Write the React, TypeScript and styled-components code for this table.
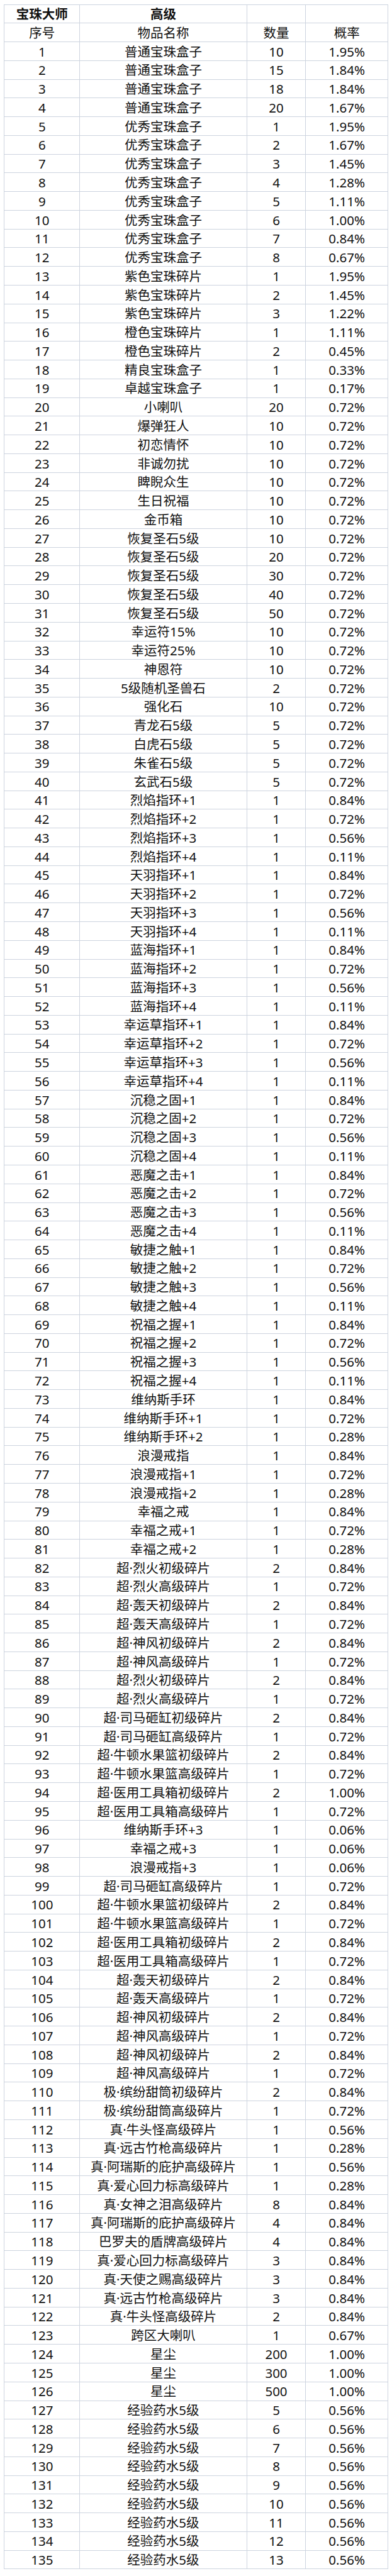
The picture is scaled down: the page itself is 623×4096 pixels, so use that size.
import React from "react";
import styled, { createGlobalStyle } from "styled-components";

type Row = [string, string, string];

const ringRates = ["0.84%", "0.72%", "0.56%", "0.11%"];
const rings = (name: string): Row[] =>
  ringRates.map((rate, i) => [`${name}+${i + 1}`, "1", rate]);

const rows: Row[] = [
  ["普通宝珠盒子", "10", "1.95%"],
  ["普通宝珠盒子", "15", "1.84%"],
  ["普通宝珠盒子", "18", "1.84%"],
  ["普通宝珠盒子", "20", "1.67%"],
  ["优秀宝珠盒子", "1", "1.95%"],
  ["优秀宝珠盒子", "2", "1.67%"],
  ["优秀宝珠盒子", "3", "1.45%"],
  ["优秀宝珠盒子", "4", "1.28%"],
  ["优秀宝珠盒子", "5", "1.11%"],
  ["优秀宝珠盒子", "6", "1.00%"],
  ["优秀宝珠盒子", "7", "0.84%"],
  ["优秀宝珠盒子", "8", "0.67%"],
  ["紫色宝珠碎片", "1", "1.95%"],
  ["紫色宝珠碎片", "2", "1.45%"],
  ["紫色宝珠碎片", "3", "1.22%"],
  ["橙色宝珠碎片", "1", "1.11%"],
  ["橙色宝珠碎片", "2", "0.45%"],
  ["精良宝珠盒子", "1", "0.33%"],
  ["卓越宝珠盒子", "1", "0.17%"],
  ["小喇叭", "20", "0.72%"],
  ["爆弹狂人", "10", "0.72%"],
  ["初恋情怀", "10", "0.72%"],
  ["非诚勿扰", "10", "0.72%"],
  ["睥睨众生", "10", "0.72%"],
  ["生日祝福", "10", "0.72%"],
  ["金币箱", "10", "0.72%"],
  ["恢复圣石5级", "10", "0.72%"],
  ["恢复圣石5级", "20", "0.72%"],
  ["恢复圣石5级", "30", "0.72%"],
  ["恢复圣石5级", "40", "0.72%"],
  ["恢复圣石5级", "50", "0.72%"],
  ["幸运符15%", "10", "0.72%"],
  ["幸运符25%", "10", "0.72%"],
  ["神恩符", "10", "0.72%"],
  ["5级随机圣兽石", "2", "0.72%"],
  ["强化石", "10", "0.72%"],
  ["青龙石5级", "5", "0.72%"],
  ["白虎石5级", "5", "0.72%"],
  ["朱雀石5级", "5", "0.72%"],
  ["玄武石5级", "5", "0.72%"],
  ...rings("烈焰指环"),
  ...rings("天羽指环"),
  ...rings("蓝海指环"),
  ...rings("幸运草指环"),
  ...rings("沉稳之固"),
  ...rings("恶魔之击"),
  ...rings("敏捷之触"),
  ...rings("祝福之握"),
  ["维纳斯手环", "1", "0.84%"],
  ["维纳斯手环+1", "1", "0.72%"],
  ["维纳斯手环+2", "1", "0.28%"],
  ["浪漫戒指", "1", "0.84%"],
  ["浪漫戒指+1", "1", "0.72%"],
  ["浪漫戒指+2", "1", "0.28%"],
  ["幸福之戒", "1", "0.84%"],
  ["幸福之戒+1", "1", "0.72%"],
  ["幸福之戒+2", "1", "0.28%"],
  ["超·烈火初级碎片", "2", "0.84%"],
  ["超·烈火高级碎片", "1", "0.72%"],
  ["超·轰天初级碎片", "2", "0.84%"],
  ["超·轰天高级碎片", "1", "0.72%"],
  ["超·神风初级碎片", "2", "0.84%"],
  ["超·神风高级碎片", "1", "0.72%"],
  ["超·烈火初级碎片", "2", "0.84%"],
  ["超·烈火高级碎片", "1", "0.72%"],
  ["超·司马砸缸初级碎片", "2", "0.84%"],
  ["超·司马砸缸高级碎片", "1", "0.72%"],
  ["超·牛顿水果篮初级碎片", "2", "0.84%"],
  ["超·牛顿水果篮高级碎片", "1", "0.72%"],
  ["超·医用工具箱初级碎片", "2", "1.00%"],
  ["超·医用工具箱高级碎片", "1", "0.72%"],
  ["维纳斯手环+3", "1", "0.06%"],
  ["幸福之戒+3", "1", "0.06%"],
  ["浪漫戒指+3", "1", "0.06%"],
  ["超·司马砸缸高级碎片", "1", "0.72%"],
  ["超·牛顿水果篮初级碎片", "2", "0.84%"],
  ["超·牛顿水果篮高级碎片", "1", "0.72%"],
  ["超·医用工具箱初级碎片", "2", "0.84%"],
  ["超·医用工具箱高级碎片", "1", "0.72%"],
  ["超·轰天初级碎片", "2", "0.84%"],
  ["超·轰天高级碎片", "1", "0.72%"],
  ["超·神风初级碎片", "2", "0.84%"],
  ["超·神风高级碎片", "1", "0.72%"],
  ["超·神风初级碎片", "2", "0.84%"],
  ["超·神风高级碎片", "1", "0.72%"],
  ["极·缤纷甜筒初级碎片", "2", "0.84%"],
  ["极·缤纷甜筒高级碎片", "1", "0.72%"],
  ["真·牛头怪高级碎片", "1", "0.56%"],
  ["真·远古竹枪高级碎片", "1", "0.28%"],
  ["真·阿瑞斯的庇护高级碎片", "1", "0.56%"],
  ["真·爱心回力标高级碎片", "1", "0.28%"],
  ["真·女神之泪高级碎片", "8", "0.84%"],
  ["真·阿瑞斯的庇护高级碎片", "4", "0.84%"],
  ["巴罗夫的盾牌高级碎片", "4", "0.84%"],
  ["真·爱心回力标高级碎片", "3", "0.84%"],
  ["真·天使之赐高级碎片", "3", "0.84%"],
  ["真·远古竹枪高级碎片", "3", "0.84%"],
  ["真·牛头怪高级碎片", "2", "0.84%"],
  ["跨区大喇叭", "1", "0.67%"],
  ["星尘", "200", "1.00%"],
  ["星尘", "300", "1.00%"],
  ["星尘", "500", "1.00%"],
  ...[5, 6, 7, 8, 9, 10, 11, 12, 13].map(
    (n): Row => ["经验药水5级", String(n), "0.56%"]
  ),
];

const App = () => {
  return (
    <>
      <GlobalStyle />
      <Sheet>
        <Cell $bold>宝珠大师</Cell>
        <Cell $bold>高级</Cell>
        <Cell />
        <Cell />
        <Cell>序号</Cell>
        <Cell>物品名称</Cell>
        <Cell>数量</Cell>
        <Cell>概率</Cell>
        {rows.map(([name, qty, rate], i) => (
          <React.Fragment key={i}>
            <Cell>{i + 1}</Cell>
            <Cell>{name}</Cell>
            <Cell>{qty}</Cell>
            <Cell>{rate}</Cell>
          </React.Fragment>
        ))}
      </Sheet>
    </>
  );
};

export default App;

const GlobalStyle = createGlobalStyle`
  body {
    margin: 0;
    background: #ffffff;
  }
`;

const Sheet = styled.div`
  display: grid;
  grid-template-columns: 120.1px 265.2px 93.9px 130.5px;
  grid-auto-rows: 29.78px;
  margin: 6.5px 0 0 6.3px;
  width: fit-content;
  border-top: 1px solid #cdd4df;
  border-left: 1px solid #cdd4df;
  /* latin font first so the middle dot stays narrow like the sheet */
  font-family: "Noto Sans", "Noto Sans CJK SC", sans-serif;
  font-size: 20.5px;
  color: #111111;
`;

const Cell = styled.div<{ $bold?: boolean }>`
  display: flex;
  align-items: center;
  justify-content: center;
  box-sizing: border-box;
  border-right: 1px solid #cdd4df;
  border-bottom: 1px solid #cdd4df;
  white-space: nowrap;
  line-height: 1;
  padding-top: 1px;
  font-weight: ${(p) => (p.$bold ? 700 : 400)};
`;
